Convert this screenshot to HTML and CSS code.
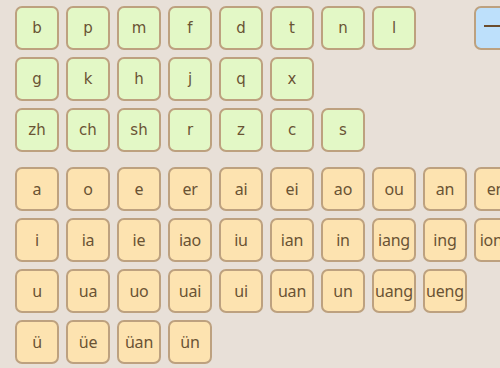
FILE: index.html
```html
<!DOCTYPE html>
<html>
<head>
<meta charset="utf-8">
<link rel="stylesheet" href="styles.css">
</head>
<body>
<div class="board">
  <div class="grid consonants">
    <div class="key c">b</div><div class="key c">p</div><div class="key c">m</div><div class="key c">f</div><div class="key c">d</div><div class="key c">t</div><div class="key c">n</div><div class="key c">l</div><div class="spacer"></div><div class="key blue"><span class="dash"></span></div>
    <div class="key c">g</div><div class="key c">k</div><div class="key c">h</div><div class="key c">j</div><div class="key c">q</div><div class="key c">x</div><div class="rowend"></div>
    <div class="key c">zh</div><div class="key c">ch</div><div class="key c">sh</div><div class="key c">r</div><div class="key c">z</div><div class="key c">c</div><div class="key c">s</div>
  </div>
  <div class="grid vowels">
    <div class="key v">a</div><div class="key v">o</div><div class="key v">e</div><div class="key v">er</div><div class="key v">ai</div><div class="key v">ei</div><div class="key v">ao</div><div class="key v">ou</div><div class="key v">an</div><div class="key v">en</div>
    <div class="key v">i</div><div class="key v">ia</div><div class="key v">ie</div><div class="key v">iao</div><div class="key v">iu</div><div class="key v">ian</div><div class="key v">in</div><div class="key v">iang</div><div class="key v">ing</div><div class="key v">iong</div>
    <div class="key v">u</div><div class="key v">ua</div><div class="key v">uo</div><div class="key v">uai</div><div class="key v">ui</div><div class="key v">uan</div><div class="key v">un</div><div class="key v">uang</div><div class="key v">ueng</div><div class="rowend"></div>
    <div class="key v">ü</div><div class="key v">üe</div><div class="key v">üan</div><div class="key v">ün</div>
  </div>
</div>
</body>
</html>
```
FILE: styles.css
```css
html, body {
  margin: 0;
  padding: 0;
  background: #e8e0d8;
  overflow: hidden;
  width: 500px;
  height: 368px;
}
.board {
  padding: 6px 0 0 15px;
  width: 600px;
}
.grid {
  display: grid;
  grid-template-columns: repeat(10, 44px);
  grid-auto-rows: 44px;
  gap: 7px;
}
.consonants .rowend { grid-column: span 4; }
.vowels .rowend { grid-column: span 1; }
.vowels {
  margin-top: 15px;
}
.key {
  box-sizing: border-box;
  border: 2px solid #bda17f;
  border-radius: 7px;
  display: flex;
  align-items: center;
  justify-content: center;
  color: #6a5334;
  white-space: nowrap;
  overflow: hidden;
}
.c {
  background: #e3f8c6;
  font-family: "DejaVu Sans", sans-serif;
  font-size: 15px;
}
.v {
  background: #fde3b0;
  font-family: "Noto Sans", sans-serif;
  font-size: 16px;
  letter-spacing: -0.2px;
}
.blue {
  background: #bde0fb;
  justify-content: flex-start;
}
.dash {
  display: block;
  width: 30px;
  height: 2px;
  margin-left: 8px;
  margin-bottom: 4px;
  background: #6b4c2c;
}
```
